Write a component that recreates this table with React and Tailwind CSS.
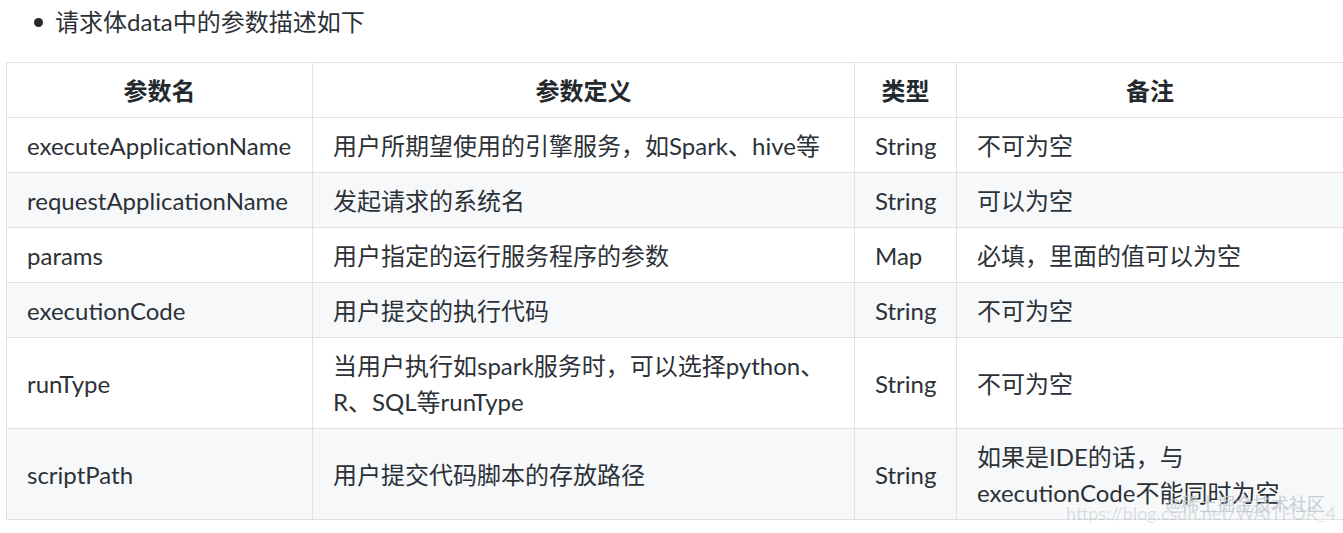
import React from 'react';

// parameter table rows
const rows = [
  { name: 'executeApplicationName', desc: '用户所期望使用的引擎服务，如Spark、hive等', type: 'String', note: '不可为空' },
  { name: 'requestApplicationName', desc: '发起请求的系统名', type: 'String', note: '可以为空' },
  { name: 'params', desc: '用户指定的运行服务程序的参数', type: 'Map', note: '必填，里面的值可以为空' },
  { name: 'executionCode', desc: '用户提交的执行代码', type: 'String', note: '不可为空' },
  { name: 'runType', desc: '当用户执行如spark服务时，可以选择python、R、SQL等runType', type: 'String', note: '不可为空' },
  { name: 'scriptPath', desc: '用户提交代码脚本的存放路径', type: 'String', note: '如果是IDE的话，与executionCode不能同时为空' },
];

const font = { fontFamily: 'Lato, "Noto Sans CJK SC", sans-serif' };

export default function App() {
  return (
    <div className="relative w-[1343px] h-[533px] bg-white text-[#2c3137] overflow-hidden" style={font}>
      <ul className="pl-[55px] pt-[4px] text-[24px] leading-[36px]">
        <li className="relative">
          <span className="absolute left-[-21px] top-[14px] w-[9px] h-[9px] rounded-full bg-[#24292e]" />
          请求体data中的参数描述如下
        </li>
      </ul>

      <table className="ml-[6px] mt-[22px] w-[1337px] table-fixed border-collapse text-[24px] leading-[36px]">
        <colgroup>
          <col className="w-[306px]" />
          <col className="w-[542px]" />
          <col className="w-[102px]" />
          <col className="w-[387px]" />
        </colgroup>
        <thead>
          <tr>
            <th className="border border-[#dfe2e5] px-[20px] pt-[10px] pb-[8px] font-bold text-[#24292e]">参数名</th>
            <th className="border border-[#dfe2e5] px-[20px] pt-[10px] pb-[8px] font-bold text-[#24292e]">参数定义</th>
            <th className="border border-[#dfe2e5] px-[20px] pt-[10px] pb-[8px] font-bold text-[#24292e]">类型</th>
            <th className="border border-[#dfe2e5] px-[20px] pt-[10px] pb-[8px] font-bold text-[#24292e]">备注</th>
          </tr>
        </thead>
        <tbody>
          {rows.map((r, i) => (
            <tr key={r.name} className={i % 2 === 1 ? 'bg-[#f6f8fa]' : 'bg-white'}>
              <td className="border border-[#dfe2e5] px-[20px] pt-[10px] pb-[8px] align-middle">{r.name}</td>
              <td className="border border-[#dfe2e5] px-[20px] pt-[10px] pb-[8px] align-middle">{r.desc}</td>
              <td className="border border-[#dfe2e5] px-[20px] pt-[10px] pb-[8px] align-middle">{r.type}</td>
              <td className="border border-[#dfe2e5] px-[20px] pt-[10px] pb-[8px] align-middle">{r.note}</td>
            </tr>
          ))}
        </tbody>
      </table>

      {/* watermark */}
      <div className="absolute left-[1066px] top-[502px] text-[18px] leading-[22px] text-[#24292e]/15 whitespace-nowrap">
        https://blog.csdn.net/WAITFOR_4
      </div>
      <div className="absolute left-[1166px] top-[492px] text-[18px] leading-[24px] text-[#c4c8cc]/90 whitespace-nowrap">
        @稀土掘金技术社区
      </div>
    </div>
  );
}
